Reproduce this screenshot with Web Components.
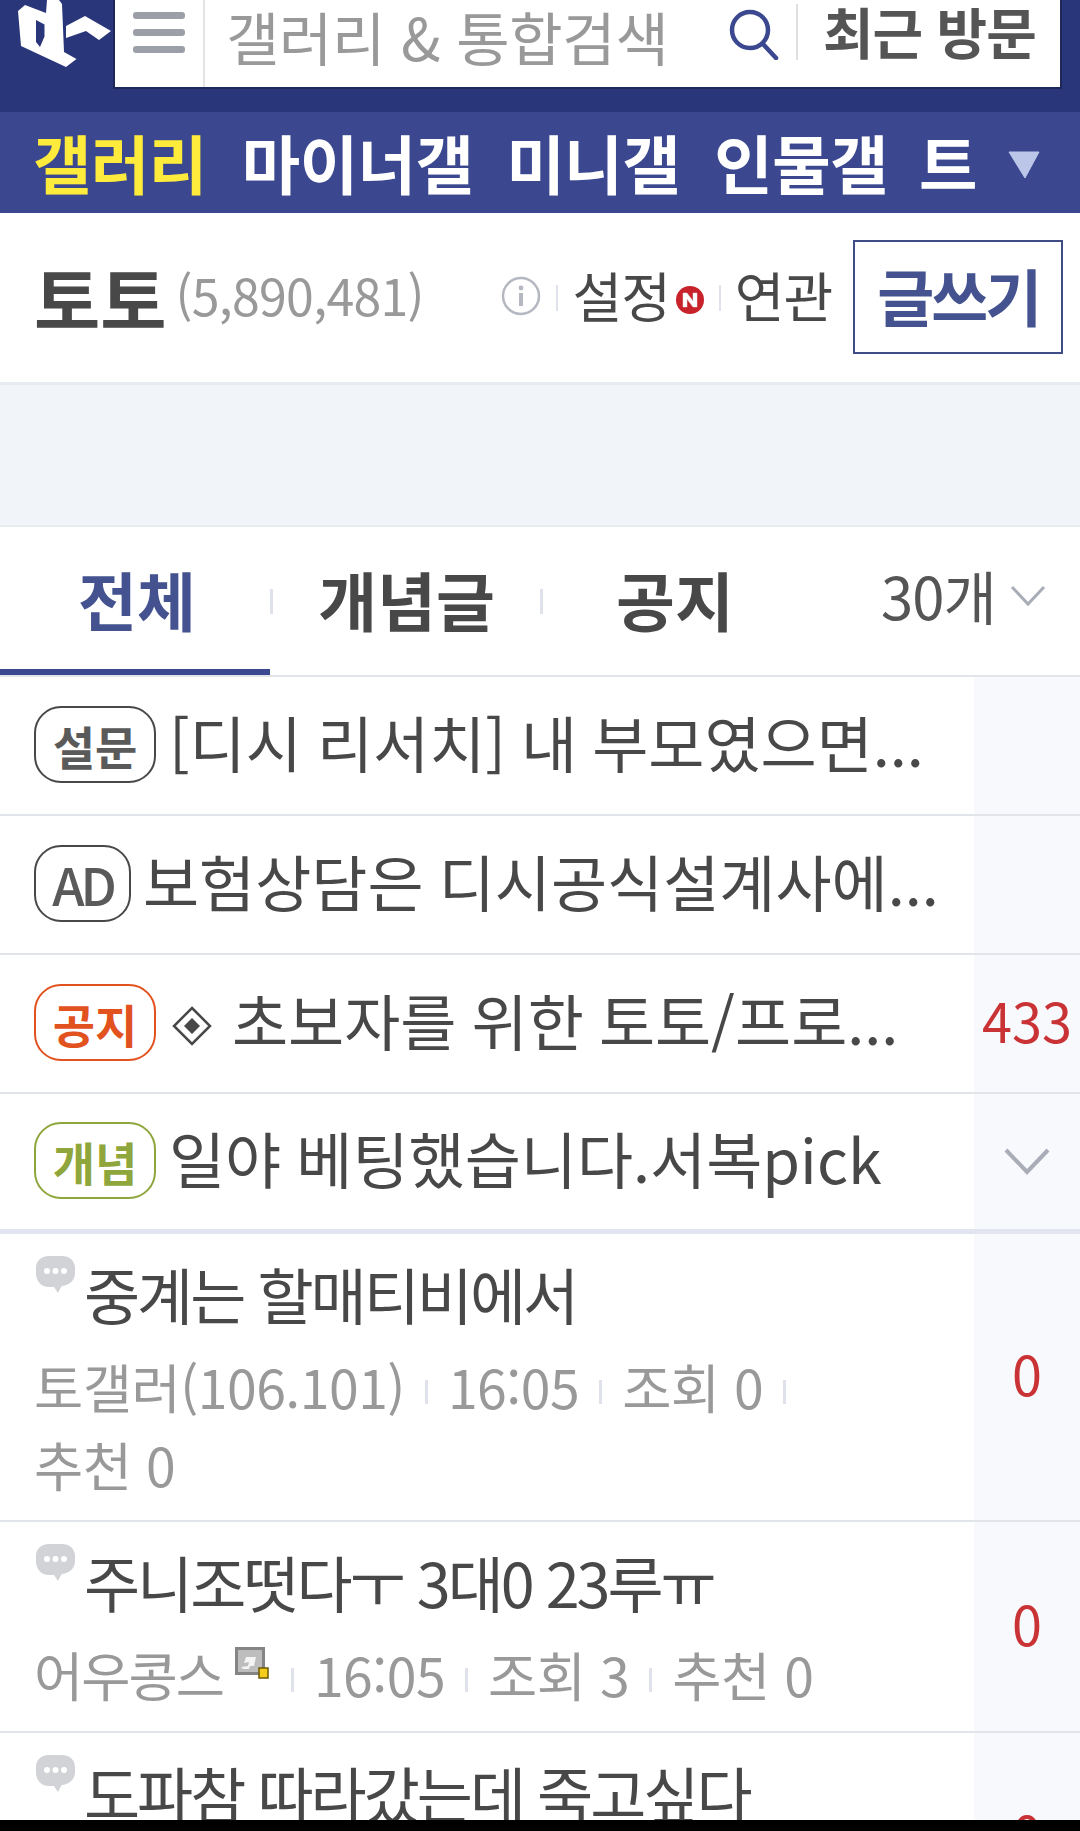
<!DOCTYPE html>
<html lang="ko">
<head>
<meta charset="utf-8">
<title>토토 갤러리</title>
<style>
    html, body { margin: 0; padding: 0; background: #fff; }
    body {
        width: 1080px;
        height: 1831px;
        overflow: hidden;
        display: flex;
        flex-direction: column;
        font-family: "Noto Sans CJK KR", "Noto Sans", sans-serif;
        color: #4a4a4a;
    }
</style>
</head>
<body>
<dc-header></dc-header>
<dc-nav></dc-nav>
<gall-title></gall-title>
<ad-strip></ad-strip>
<list-tabs></list-tabs>
<post-list>
    <notice-row badge="설문" width="122" text="[디시 리서치] 내 부모였으면..."></notice-row>
    <notice-row badge="AD" width="97" text="보험상담은 디시공식설계사에..."></notice-row>
    <notice-row badge="공지" width="122" tone="notice" diamond text="초보자를 위한 토토/프로..." count="433"></notice-row>
    <notice-row badge="개념" width="122" tone="best" text="일야 베팅했습니다.서복pick" chevron last></notice-row>
    <post-row title="중계는 할매티비에서" count="0" height="288">
        <span>토갤러(106.101)</span><span>16:05</span><span>조회 0</span><span>추천 0</span>
    </post-row>
    <post-row title="주니조떳다ㅜ 3대0 23루ㅠ" count="0" height="211" gonick>
        <span>어우콩스</span><span>16:05</span><span>조회 3</span><span>추천 0</span>
    </post-row>
    <post-row title="도파참 따라갔는데 죽고싶다" count="0" height="210"></post-row>
</post-list>
<bottom-bar></bottom-bar>

<script>
const FONT = '"Noto Sans CJK KR", "Noto Sans", sans-serif';

class DcHeader extends HTMLElement {
    constructor() {
        super();
        this.attachShadow({ mode: 'open' });
        this.shadowRoot.innerHTML = `
            <style>
                :host { display: flex; flex: none; height: 112px; background: #29367a; font-family: ${FONT}; }
                .logo { width: 113px; height: 70px; flex: none; }
                .box {
                    width: 949px; height: 89px; box-sizing: border-box;
                    background: #fff; border: 2px solid #1d2759; border-top: 0;
                    display: flex; align-items: flex-start;
                }
                .menu { width: 90px; height: 87px; flex: none; display: flex; flex-direction: column; gap: 10px; padding: 12px 0 0 18px; box-sizing: border-box; border-right: 2px solid #e4e4e4; }
                .menu i { display: block; width: 52px; height: 7px; border-radius: 3px; background: #9b9fa8; }
                .ph { width: 523px; padding-left: 21px; box-sizing: border-box; flex: none; font-size: 58px; line-height: 72px; color: #999; white-space: nowrap; letter-spacing: -.3px; }
                .search { width: 50px; height: 52px; flex: none; margin: 8px 0 0 1px; }
                .sep { width: 2px; height: 56px; background: #e0e0e0; flex: none; margin: 4px 0 0 17px; }
                .recent { font-size: 55px; font-weight: 700; line-height: 60px; color: #555; margin-left: 25px; white-space: nowrap; letter-spacing: -1px; }
            </style>
            <svg class="logo" viewBox="0 0 113 70">
                <path fill="#fff" fill-rule="evenodd" d="M18 11l7-6 21 8 1-13h12l3 4 2 48 12.500 7L66 67 21 46zM36 20l8.500 4.500v12L40 47l-4-5z"/>
                <path fill="#fff" d="M66 26l19-10 26 15-12 9-13-9-20 7z"/>
            </svg>
            <div class="box">
                <div class="menu"><i></i><i></i><i></i></div>
                <div class="ph">갤러리 &amp; 통합검색</div>
                <svg class="search" viewBox="0 0 50 52" fill="none" stroke="#3b4890" stroke-width="4.5" stroke-linecap="round">
                    <circle cx="21" cy="22" r="18"/><line x1="34" y1="36" x2="47" y2="50"/>
                </svg>
                <div class="sep"></div>
                <div class="recent">최근 방문</div>
            </div>`;
    }
}
customElements.define('dc-header', DcHeader);

class DcNav extends HTMLElement {
    constructor() {
        super();
        this.attachShadow({ mode: 'open' });
        const items = [['갤러리', 33, 1], ['마이너갤', 35], ['미니갤', 33], ['인물갤', 34], ['트', 31]];
        this.shadowRoot.innerHTML = `
            <style>
                :host { display: flex; flex: none; height: 101px; background: #3b4890; align-items: center; font-family: ${FONT}; overflow: hidden; }
                span { font-size: 63.500px; font-weight: 700; color: #fff; white-space: nowrap; line-height: 96px; margin-bottom: 4px; letter-spacing: -.5px; }
                .on { color: #ffeb3b; }
                svg { width: 32px; height: 28px; margin-left: 31px; flex: none; margin-top: 4px; }
            </style>
            ${items.map(i => `<span class="${i[2] ? 'on' : ''}" style="margin-left:${i[1]}px">${i[0]}</span>`).join('')}
            <svg viewBox="0 0 32 28"><path fill="#bcc6e8" d="M1 1h30L17 27z" stroke="#bcc6e8" stroke-width="1" stroke-linejoin="round"/></svg>`;
    }
}
customElements.define('dc-nav', DcNav);

class GallTitle extends HTMLElement {
    constructor() {
        super();
        this.attachShadow({ mode: 'open' });
        this.shadowRoot.innerHTML = `
            <style>
                :host { display: flex; flex: none; height: 169px; align-items: center; font-family: ${FONT}; box-sizing: border-box; padding: 0 0 0 34px; white-space: nowrap; }
                span { margin-bottom: 5px; }
                .name { font-size: 72px; font-weight: 700; color: #484848; flex: none; margin-bottom: 3px; }
                .num { font-size: 50px; color: #999; margin: 0 0 8px 9px; letter-spacing: -.7px; width: 326px; flex: none; }
                .info { width: 40px; height: 40px; flex: none; margin-bottom: 4px; }
                .sep { width: 2px; height: 26px; background: #dfe2ea; flex: none; margin: 0 14px 0 15px; }
                .link { font-size: 54px; color: #484848; letter-spacing: -1px; flex: none; margin-bottom: 7px; }
                .new { width: 28px; height: 28px; flex: none; margin: 4px 0 0 6px; }
                .write { margin: 0 0 2px 21px; width: 210px; height: 114px; flex: none; box-sizing: border-box; border: 2px solid #3f4c86; display: flex; align-items: center; justify-content: center; font-size: 62px; font-weight: 700; color: #44528f; letter-spacing: -3px; padding-bottom: 4px; }
            </style>
            <span class="name">토토</span>
            <span class="num">(5,890,481)</span>
            <svg class="info" viewBox="0 0 40 40" fill="none">
                <circle cx="20" cy="20" r="18" stroke="#b5b8c0" stroke-width="2.5"/>
                <rect x="18" y="17" width="4" height="13" fill="#b5b8c0"/><circle cx="20" cy="12" r="2.4" fill="#b5b8c0"/>
            </svg>
            <i class="sep"></i>
            <span class="link">설정</span>
            <svg class="new" viewBox="0 0 28 28">
                <circle cx="14" cy="14" r="14" fill="#c8232a"/>
                <path fill="#fff" stroke="#ddd" stroke-width=".5" d="M7 7h4l6 8V7h4v14h-4l-6-8v8H7z"/>
            </svg>
            <i class="sep"></i>
            <span class="link">연관</span>
            <div class="write">글쓰기</div>`;
    }
}
customElements.define('gall-title', GallTitle);

class AdStrip extends HTMLElement {
    constructor() {
        super();
        this.attachShadow({ mode: 'open' });
        this.shadowRoot.innerHTML = `
            <style>
                :host { display: block; flex: none; height: 145px; box-sizing: border-box; background: #f1f4f9; border-top: 3px solid #e8ebef; border-bottom: 2px solid #e8ebef; }
            </style>`;
    }
}
customElements.define('ad-strip', AdStrip);

class ListTabs extends HTMLElement {
    constructor() {
        super();
        this.attachShadow({ mode: 'open' });
        this.shadowRoot.innerHTML = `
            <style>
                :host { display: flex; flex: none; height: 150px; box-sizing: border-box; border-bottom: 2px solid #e1e4e8; font-family: ${FONT}; white-space: nowrap; }
                .tab { width: 267px; flex: none; display: flex; align-items: center; justify-content: center; font-size: 64px; font-weight: 700; color: #484848; height: 148px; box-sizing: border-box; padding-bottom: 6px; }
                .tab.on { width: 270px; color: #44528f; border-bottom: 6px solid #3b4890; padding: 0 0 0 4px; }
                .tab.last { width: 264px; }
                .sep { width: 3px; height: 25px; background: #dfe2ea; flex: none; margin-top: 62px; }
                .size { margin-left: 74px; font-size: 58px; color: #555; line-height: 136px; letter-spacing: -1px; flex: none; }
                svg { width: 36px; height: 22px; margin: 58px 0 0 14px; flex: none; }
            </style>
            <div class="tab on">전체</div><i class="sep"></i>
            <div class="tab">개념글</div><i class="sep"></i>
            <div class="tab last">공지</div>
            <span class="size">30개</span>
            <svg viewBox="0 0 36 22" fill="none" stroke="#a9adb7" stroke-width="3"><polyline points="2,2 18,19 34,2"/></svg>`;
    }
}
customElements.define('list-tabs', ListTabs);

class PostList extends HTMLElement {
    constructor() {
        super();
        this.attachShadow({ mode: 'open' });
        this.shadowRoot.innerHTML = `
            <style>
                :host { display: flex; flex-direction: column; flex: 1; min-height: 0; overflow: hidden; font-family: ${FONT}; }
            </style>
            <slot></slot>`;
    }
}
customElements.define('post-list', PostList);

class NoticeRow extends HTMLElement {
    constructor() {
        super();
        this.attachShadow({ mode: 'open' });
    }

    connectedCallback() {
        const tones = { notice: '#e2521f', best: '#8ea63c' };
        const tone = tones[this.getAttribute('tone')];
        const border = tone || '#484848';
        const label = tone || '#5a5a5a';
        const last = this.hasAttribute('last');
        const isAd = this.getAttribute('badge') === 'AD';
        this.shadowRoot.innerHTML = `
            <style>
                :host { display: flex; flex: none; height: ${last ? 140 : 139}px; box-sizing: border-box; border-bottom: ${last ? 5 : 2}px solid ${last ? '#e2e4ef' : '#e1e4e8'}; white-space: nowrap; }
                .main { width: 974px; flex: none; display: flex; align-items: center; padding-left: 34px; box-sizing: border-box; overflow: hidden; }
                .badge {
                    width: ${this.getAttribute('width')}px; height: 77px; flex: none; box-sizing: border-box; margin-bottom: 2px;
                    border: 2px solid ${border}; border-radius: 27px; color: ${label};
                    display: flex; align-items: center; justify-content: center;
                    font-size: ${isAd ? 52 : 46}px; font-weight: ${isAd ? 500 : 700}; letter-spacing: ${isAd ? -4 : 0}px; margin-right: ${isAd ? 12 : 13}px;
                }
                .diamond { width: 40px; height: 40px; flex: none; margin: 4px 20px 0 3px; }
                .text { font-size: 61px; color: #484848; margin-bottom: 9px; word-spacing: -2px; }
                .side { flex: 1; background: #f8f9fc; display: flex; align-items: center; justify-content: center; font-size: 54px; color: #c93335; padding-bottom: 9px; }
                .side svg { width: 46px; height: 30px; margin-top: 9px; }
            </style>
            <div class="main">
                <span class="badge">${this.getAttribute('badge')}</span>
                ${this.hasAttribute('diamond') ? `<svg class="diamond" viewBox="0 0 40 40" fill="none"><path d="M20 2l18 18-18 18L2 20z" stroke="#484848" stroke-width="2.5"/><path d="M20 12l8 8-8 8-8-8z" fill="#484848"/></svg>` : ''}
                <span class="text">${this.getAttribute('text')}</span>
            </div>
            <div class="side">
                ${this.getAttribute('count') || ''}
                ${this.hasAttribute('chevron') ? `<svg viewBox="0 0 46 30" fill="none" stroke="#a9adb7" stroke-width="4"><polyline points="2,3 23,25 44,3"/></svg>` : ''}
            </div>`;
    }
}
customElements.define('notice-row', NoticeRow);

class PostRow extends HTMLElement {
    constructor() {
        super();
        this.attachShadow({ mode: 'open' });
    }

    connectedCallback() {
        this.shadowRoot.innerHTML = `
            <style>
                :host { display: flex; flex: none; height: ${this.getAttribute('height')}px; box-sizing: border-box; border-bottom: 2px solid #e1e4e8; white-space: nowrap; }
                .main { width: 974px; flex: none; box-sizing: border-box; padding: 21px 0 0 35px; }
                .head { display: flex; align-items: flex-start; }
                .bubble { width: 41px; height: 40px; flex: none; margin-right: 8px; }
                .title { font-size: 61px; color: #484848; line-height: 80px; margin-top: -1px; letter-spacing: -3px; }
                .meta { display: flex; flex-wrap: wrap; align-items: center; font-size: 53.500px; color: #999; line-height: 78px; margin: 13px 0 0 -1px; width: 890px; }
                .gon { width: 34px; height: 32px; margin: -22px 2px 0 12px; flex: none; }
                .side { flex: 1; background: #f8f9fc; display: flex; align-items: center; justify-content: center; font-size: 54px; color: #c93335; padding-bottom: 9px; }
            </style>
            <div class="main">
                <div class="head">
                    <svg class="bubble" viewBox="0 0 41 40">
                        <path fill="#d2d3d6" d="M14 1h13c8 0 13 5 13 12v5c0 7-5 12-13 13l-1 1-3 6-4-6h-5C6 32 1 26 1 18v-5C1 6 6 1 14 1z"/>
                        <circle cx="12" cy="16" r="3" fill="#fff"/><circle cx="20.500" cy="16" r="3" fill="#fff"/><circle cx="29" cy="16" r="3" fill="#fff"/>
                    </svg>
                    <span class="title">${this.getAttribute('title')}</span>
                </div>
                <div class="meta"></div>
            </div>
            <div class="side">${this.getAttribute('count')}</div>`;
        const meta = this.shadowRoot.querySelector('.meta');
        const parts = [...this.querySelectorAll('span')];
        const gon = this.hasAttribute('gonick');
        parts.forEach((p, i) => {
            const s = document.createElement('span');
            s.textContent = p.textContent;
            s.style.letterSpacing = (i === 0 && gon) ? '-2px' : '-.5px';
            meta.append(s);
            if (i === 0 && gon) {
                const g = document.createElementNS('http://www.w3.org/2000/svg', 'svg');
                g.setAttribute('class', 'gon');
                g.setAttribute('viewBox', '0 0 34 32');
                g.innerHTML = '<rect x="1.500" y="1.500" width="27" height="25" fill="#bdbdbd" stroke="#858585" stroke-width="3"/><path d="M6 20l7-1 1-4-5 1 2-6h10l-2 9h-4l-1 3H8z" fill="#f4f4f4"/><rect x="24" y="21" width="9" height="10" fill="#f5cc19" stroke="#6b5a00" stroke-width="1.500"/>';
                meta.append(g);
            }
            if (i < parts.length - 1) {
                const sep = document.createElement('i');
                sep.style.cssText = 'display:inline-block;width:3px;height:24px;background:#dfe2ea;margin:12px 20px 0 20px;flex:none';
                meta.append(sep);
            }
        });
    }
}
customElements.define('post-row', PostRow);

class BottomBar extends HTMLElement {
    constructor() {
        super();
        this.attachShadow({ mode: 'open' });
        this.shadowRoot.innerHTML = `<style>:host { display: block; flex: none; height: 11px; background: #000; }</style>`;
    }
}
customElements.define('bottom-bar', BottomBar);
</script>
</body>
</html>
